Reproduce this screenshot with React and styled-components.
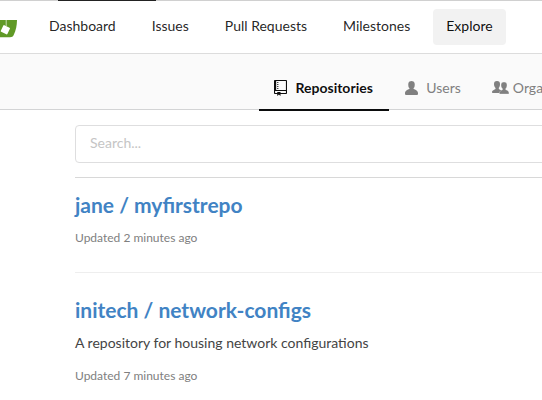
import React from "react";
import styled, { createGlobalStyle } from "styled-components";

const Global = createGlobalStyle`
  *{box-sizing:border-box}
  body{margin:0;background:#fff;font-family:Lato,sans-serif;font-size:14px;overflow:hidden}
`;
const Page = styled.div`width:542px;height:400px;overflow:hidden;color:rgba(0,0,0,.87);`;
const TopLine = styled.div`height:1px;background:#d0d0d0;padding-left:58px;`;
const Progress = styled.div`width:98px;height:1px;background:#222;`;
const Nav = styled.nav`height:53px;display:flex;align-items:center;border-bottom:1px solid #dcdcdc;padding-bottom:1px;`;
const Logo = styled.svg`width:18px;height:24px;flex:none;margin-right:18px;`;
const NavItem = styled.a`height:36px;line-height:34px;padding:0 13px;margin-right:10px;white-space:nowrap;border-radius:4px;color:${p => p.$active ? "rgba(0,0,0,.95)" : "inherit"};background:${p => p.$active ? "#f2f2f2" : "transparent"};`;
const Tabs = styled.div`height:56px;display:flex;align-items:flex-end;background:#fafafa;border-bottom:1px solid #d3d4d5;padding-left:259px;`;
const Tab = styled.a`flex:none;height:43px;margin-bottom:-2px;margin-right:${p => p.$active ? 1 : 0}px;padding:0 16px 2px 15px;display:flex;align-items:center;white-space:nowrap;border-bottom:2px solid ${p => p.$active ? "#0b0c0d" : "transparent"};font-weight:${p => p.$active ? 700 : 400};color:${p => p.$active ? "rgba(0,0,0,.95)" : "#808080"};`;
const Icon = styled.svg`width:${p => p.$wide ? 17 : 13}px;height:${p => p.$wide ? 14 : 16}px;fill:currentColor;flex:none;margin-right:${p => p.$wide ? 4 : 8.5}px;`;
const Main = styled.main`padding:15px 0 0 75px;`;
const Search = styled.div`width:600px;height:38px;border:1px solid #dededf;border-radius:4px;padding:0 14px;line-height:34px;color:#c5c5c5;`;
const Divider = styled.div`height:1px;width:600px;margin-top:14px;background:#d8d8d8;`;
const Repo = styled.article`width:600px;padding-top:${p => p.$first ? 13 : 23}px;border-bottom:1px solid #eee;height:${p => p.$first ? 95 : 150}px;`;
const Title = styled.h2`margin:0;font-size:21px;line-height:28px;color:#4183c4;font-weight:700;`;
const Description = styled.p`margin:9px 0 0;line-height:20px;color:#444;`;
const Updated = styled.p`margin:${p => p.$low ? 14 : 10}px 0 0;font-size:12px;line-height:18px;color:#808080;`;

const RepoIcon = () => (
  <Icon viewBox="0 0 12 16" preserveAspectRatio="none">
    <path d="M4 9H3V8h1v1zm0-3H3v1h1V6zm0-2H3v1h1V4zm0-2H3v1h1V2zm8-1v12c0 .55-.45 1-1 1H6v2l-1.500-1.500L3 16v-2H1c-.55 0-1-.45-1-1V1c0-.55.45-1 1-1h10c.55 0 1 .45 1 1zm-1 10H1v2h2v-1h3v1h5v-2zm0-10H2v9h9V1z" />
  </Icon>
);
const UserIcon = () => (
  <Icon viewBox="0 0 12 16" preserveAspectRatio="none">
    <path d="M12 14.002a.998.998 0 01-.998.998H1.001A1 1 0 010 13.999V13c0-2.633 4-4 4-4s.229-.409 0-1c-.841-.62-.944-1.590-1-4 .173-2.413 1.867-3 3-3s2.827.586 3 3c-.056 2.410-.159 3.380-1 4-.229.590 0 1 0 1s4 1.367 4 4v1.002z" />
  </Icon>
);
const OrganizationIcon = () => (
  <Icon $wide viewBox="0 0 17 14">
    <path d="M5 0C7.200 0 8 1.300 8 3c0 1.700-.4 3.200-1.300 4 0 1.200.8 1.500 2 2 .9.400 1.300 1 1.300 2v1H.7c-.5 0-.7-.4-.7-.8V11c0-1.300 1.500-2 3.500-3V7C2.600 6.200 2 4.700 2 3c0-1.700.8-3 3-3z" />
    <path d="M12 1c2.100 0 3 1.200 3 3 0 1.700-.5 2.900-1.300 3.700v1c2.100.7 3.300 1.700 3.300 3.300v.500c0 .3-.3.500-.6.500H8c-.4 0-.6-.2-.6-.6V12c0-1.500 1.200-2.500 3.100-3.300v-1C9.600 6.900 9 5.700 9 4c0-1.800.9-3 3-3z" stroke="#fafafa" strokeWidth=".3" />
  </Icon>
);

export default function App() {
  return <Page><Global />
    <TopLine><Progress /></TopLine>
    <Nav>
      <Logo viewBox="0 0 18 24">
        <path d="M0 5h17c-.1 5.300-1 10.200-3.200 14.700-.9 1.800-1.800 2.500-3.800 2.500H0z" fill="#609926"/>
        <path d="M6.200 5v6" stroke="#c6dbb0" strokeWidth="1"/>
        <rect x="1.700" y="11.100" width="7.300" height="7.300" rx=".8" transform="rotate(26 5.350 14.750)" fill="#fff"/>
      </Logo>
      <NavItem>Dashboard</NavItem><NavItem>Issues</NavItem><NavItem>Pull Requests</NavItem><NavItem>Milestones</NavItem><NavItem $active>Explore</NavItem>
    </Nav>
    <Tabs>
      <Tab $active><RepoIcon />Repositories</Tab>
      <Tab><UserIcon />Users</Tab>
      <Tab><OrganizationIcon />Organizations</Tab>
    </Tabs>
    <Main>
      <Search>Search...</Search><Divider />
      <Repo $first><Title>jane / myfirstrepo</Title><Updated>Updated 2 minutes ago</Updated></Repo>
      <Repo><Title>initech / network-configs</Title><Description>A repository for housing network configurations</Description><Updated $low>Updated 7 minutes ago</Updated></Repo>
    </Main>
  </Page>;
}
